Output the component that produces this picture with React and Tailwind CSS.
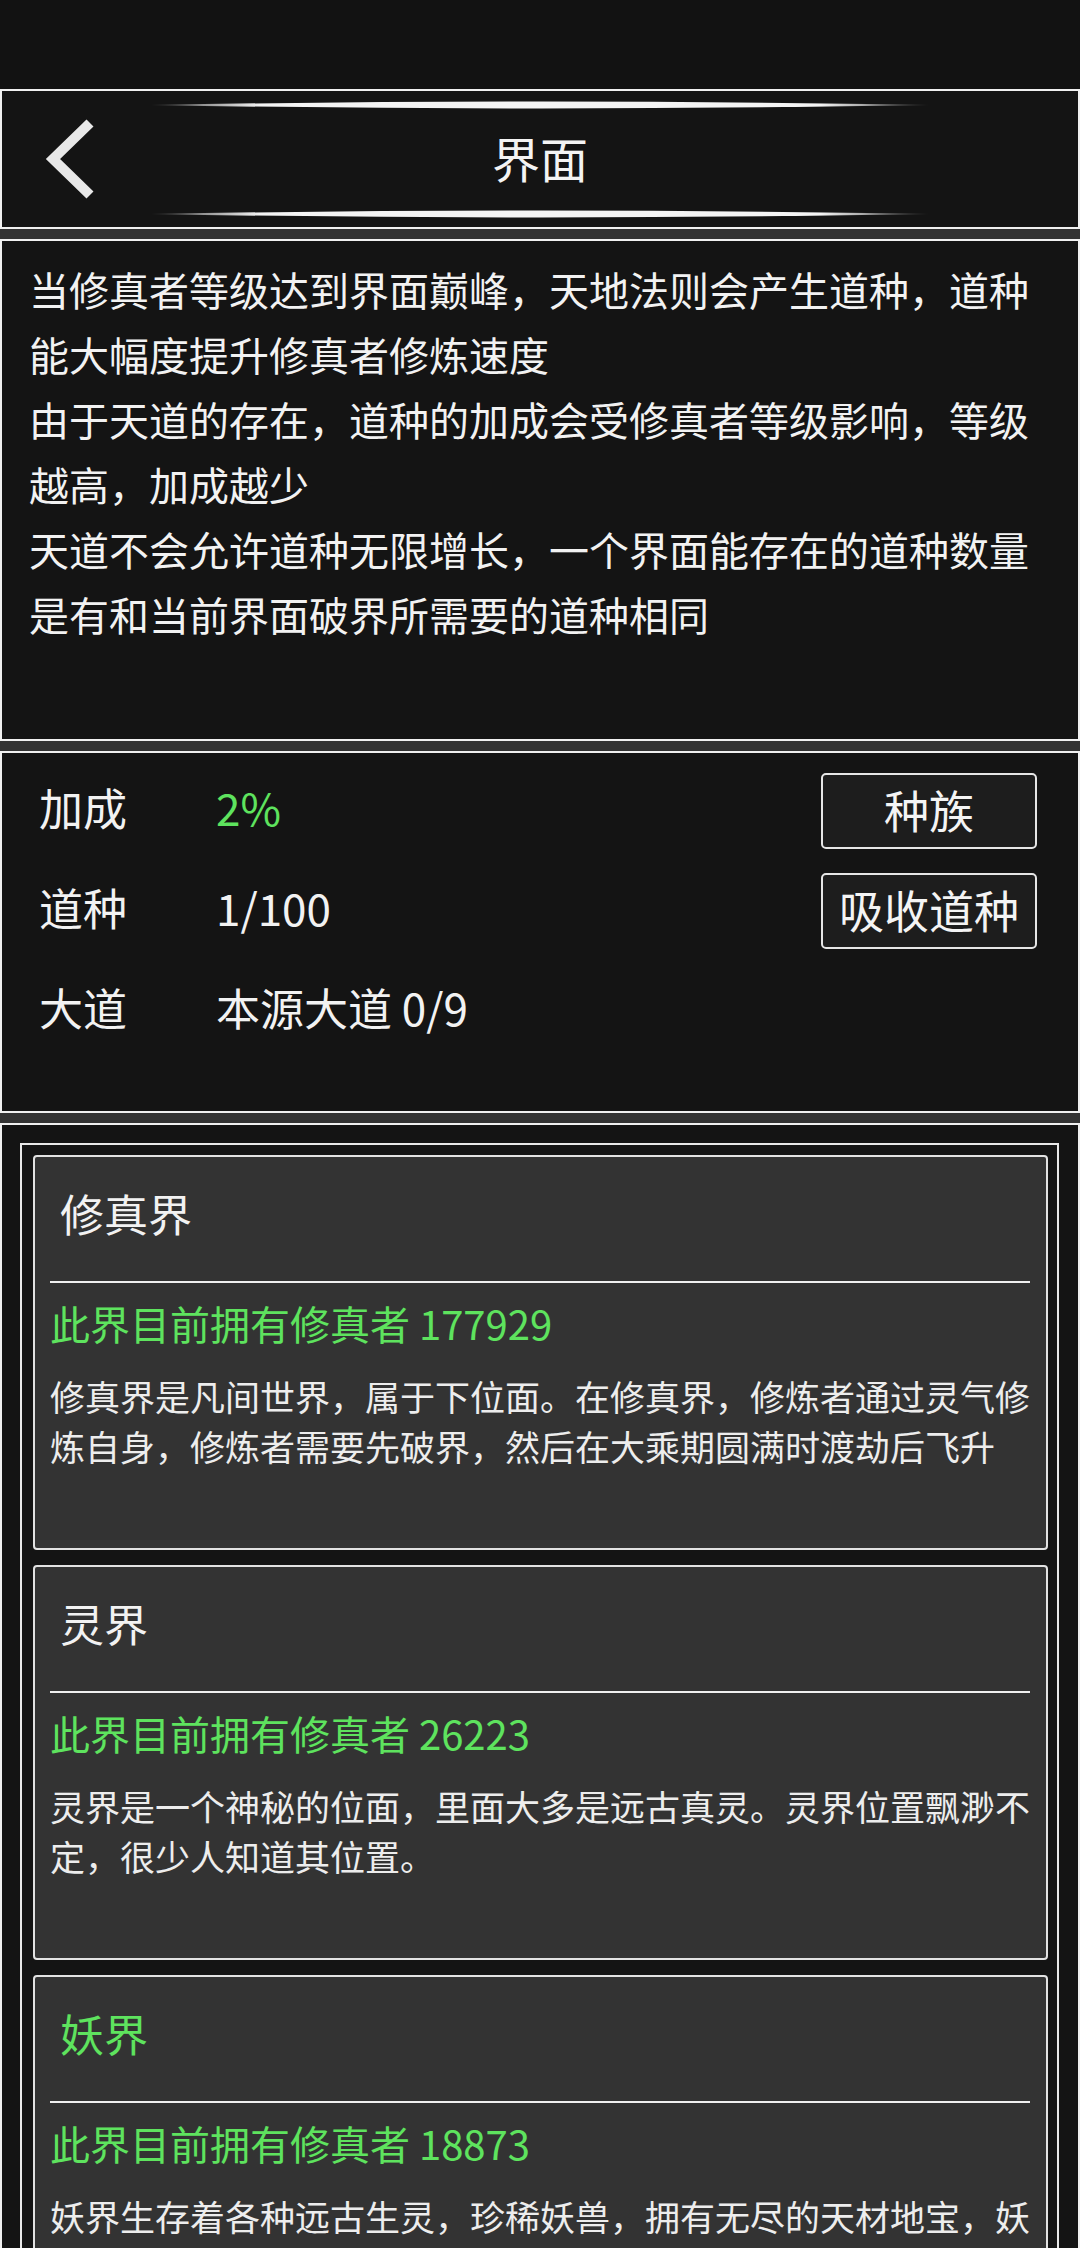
import React from "react";

const realms = [
  {
    name: "修真界",
    highlight: false,
    count: 177929,
    desc: "修真界是凡间世界，属于下位面。在修真界，修炼者通过灵气修炼自身，修炼者需要先破界，然后在大乘期圆满时渡劫后飞升",
  },
  {
    name: "灵界",
    highlight: false,
    count: 26223,
    desc: "灵界是一个神秘的位面，里面大多是远古真灵。灵界位置飘渺不定，很少人知道其位置。",
  },
  {
    name: "妖界",
    highlight: true,
    count: 18873,
    desc: "妖界生存着各种远古生灵，珍稀妖兽，拥有无尽的天材地宝，妖族在此繁衍生息。",
  },
];

function Glow() {
  return (
    <svg width="778" height="8" viewBox="0 0 778 8" className="mx-auto block">
      <defs>
        <linearGradient id="glow" x1="0" x2="1" y1="0" y2="0">
          <stop offset="0" stopColor="#3a3a3a" />
          <stop offset="0.14" stopColor="#f4f4f4" />
          <stop offset="0.86" stopColor="#f4f4f4" />
          <stop offset="1" stopColor="#3a3a3a" />
        </linearGradient>
      </defs>
      <path d="M0 4 Q389 -3 778 4 Q389 11 0 4 Z" fill="url(#glow)" />
    </svg>
  );
}

function Header() {
  return (
    <div className="relative flex h-[140px] flex-col border-2 border-[#f0f0f0] bg-[#141414] pt-[10px] pb-[9px]">
      <Glow />
      <div className="flex flex-1 items-center justify-center pb-[5px] text-[48px] leading-none text-[#f4f4f4]">
        界面
      </div>
      <Glow />
      {/* back chevron */}
      <button className="absolute left-[36px] top-[28px] h-[80px] w-[60px]">
        <svg width="60" height="80" viewBox="0 0 60 80" className="block">
          <polyline
            points="52,4 15,40 52,76"
            fill="none"
            stroke="#e8e8e8"
            strokeWidth="10"
            strokeLinecap="butt"
            strokeLinejoin="miter"
          />
        </svg>
      </button>
    </div>
  );
}

function Intro() {
  return (
    <div className="h-[502px] border-2 border-[#f0f0f0] bg-[#141414] pt-[16px] pl-[27px] pr-[27px] text-[40px] leading-[65px] text-[#f2f2f2]">
      <p>当修真者等级达到界面巅峰，天地法则会产生道种，道种能大幅度提升修真者修炼速度</p>
      <p>由于天道的存在，道种的加成会受修真者等级影响，等级越高，加成越少</p>
      <p>天道不会允许道种无限增长，一个界面能存在的道种数量是有和当前界面破界所需要的道种相同</p>
    </div>
  );
}

function StatRow({ label, children }) {
  return (
    <div className="flex h-[100px] items-center text-[44px] leading-none">
      <span className="w-[177px] text-[#f2f2f2]">{label}</span>
      {children}
    </div>
  );
}

function Stats() {
  return (
    <div className="flex h-[362px] items-start justify-between border-2 border-[#f0f0f0] bg-[#141414] pl-[37px] pr-[41px]">
      <div className="pt-[4px]">
        <StatRow label="加成">
          <span className="text-[#5ee35e]">2%</span>
        </StatRow>
        <StatRow label="道种">
          <span className="text-[#f2f2f2]">1/100</span>
        </StatRow>
        <StatRow label="大道">
          <span className="text-[#f2f2f2]">本源大道 0/9</span>
        </StatRow>
      </div>
      <div className="flex flex-col gap-[24px] pt-[20px]">
        <button className="flex h-[76px] w-[216px] items-center justify-center rounded-[5px] border-2 border-[#e6e6e6] bg-[#1d1d1d] pb-[3px] text-[45px] leading-none text-[#f4f4f4]">
          种族
        </button>
        <button className="flex h-[76px] w-[216px] items-center justify-center rounded-[5px] border-2 border-[#e6e6e6] bg-[#1d1d1d] pb-[3px] text-[45px] leading-none text-[#f4f4f4]">
          吸收道种
        </button>
      </div>
    </div>
  );
}

function RealmCard({ realm }) {
  return (
    <div className="h-[395px] shrink-0 rounded-[4px] border-2 border-[#e2e2e2] bg-[#333333]">
      <div
        className={
          "flex h-[120px] items-center pb-[8px] pl-[25px] text-[44px] leading-none " +
          (realm.highlight ? "text-[#5ee35e]" : "text-[#f2f2f2]")
        }
      >
        {realm.name}
      </div>
      <div className="mt-[4px] ml-[15px] mr-[16px] h-[2px] bg-[#f0f0f0]" />
      <div className="mt-[12px] pl-[15px] text-[40px] leading-[56px] text-[#5ee35e]">
        此界目前拥有修真者 {realm.count}
      </div>
      <p className="mt-[20px] pl-[15px] pr-[6px] text-[35px] leading-[50px] text-[#ededed]">
        {realm.desc}
      </p>
    </div>
  );
}

function RealmList() {
  return (
    <div className="flex flex-1 flex-col border-2 border-b-0 border-[#f0f0f0] bg-[#141414] pt-[18px] pl-[18px] pr-[19px] pb-[18px]">
      <div className="flex flex-1 flex-col gap-[15px] overflow-hidden border-2 border-[#e8e8e8] pt-[10px] pl-[11px] pr-[9px]">
        {realms.map((r) => (
          <RealmCard key={r.name} realm={r} />
        ))}
      </div>
    </div>
  );
}

export default function App() {
  return (
    <div className="flex h-[2248px] w-[1080px] flex-col overflow-hidden bg-[#121212] font-['Noto_Sans_CJK_SC','Noto_Sans',sans-serif]">
      <div className="h-[89px] shrink-0" />
      <div className="flex flex-1 flex-col gap-[10px] bg-[#333333]">
        <Header />
        <Intro />
        <Stats />
        <RealmList />
      </div>
    </div>
  );
}
